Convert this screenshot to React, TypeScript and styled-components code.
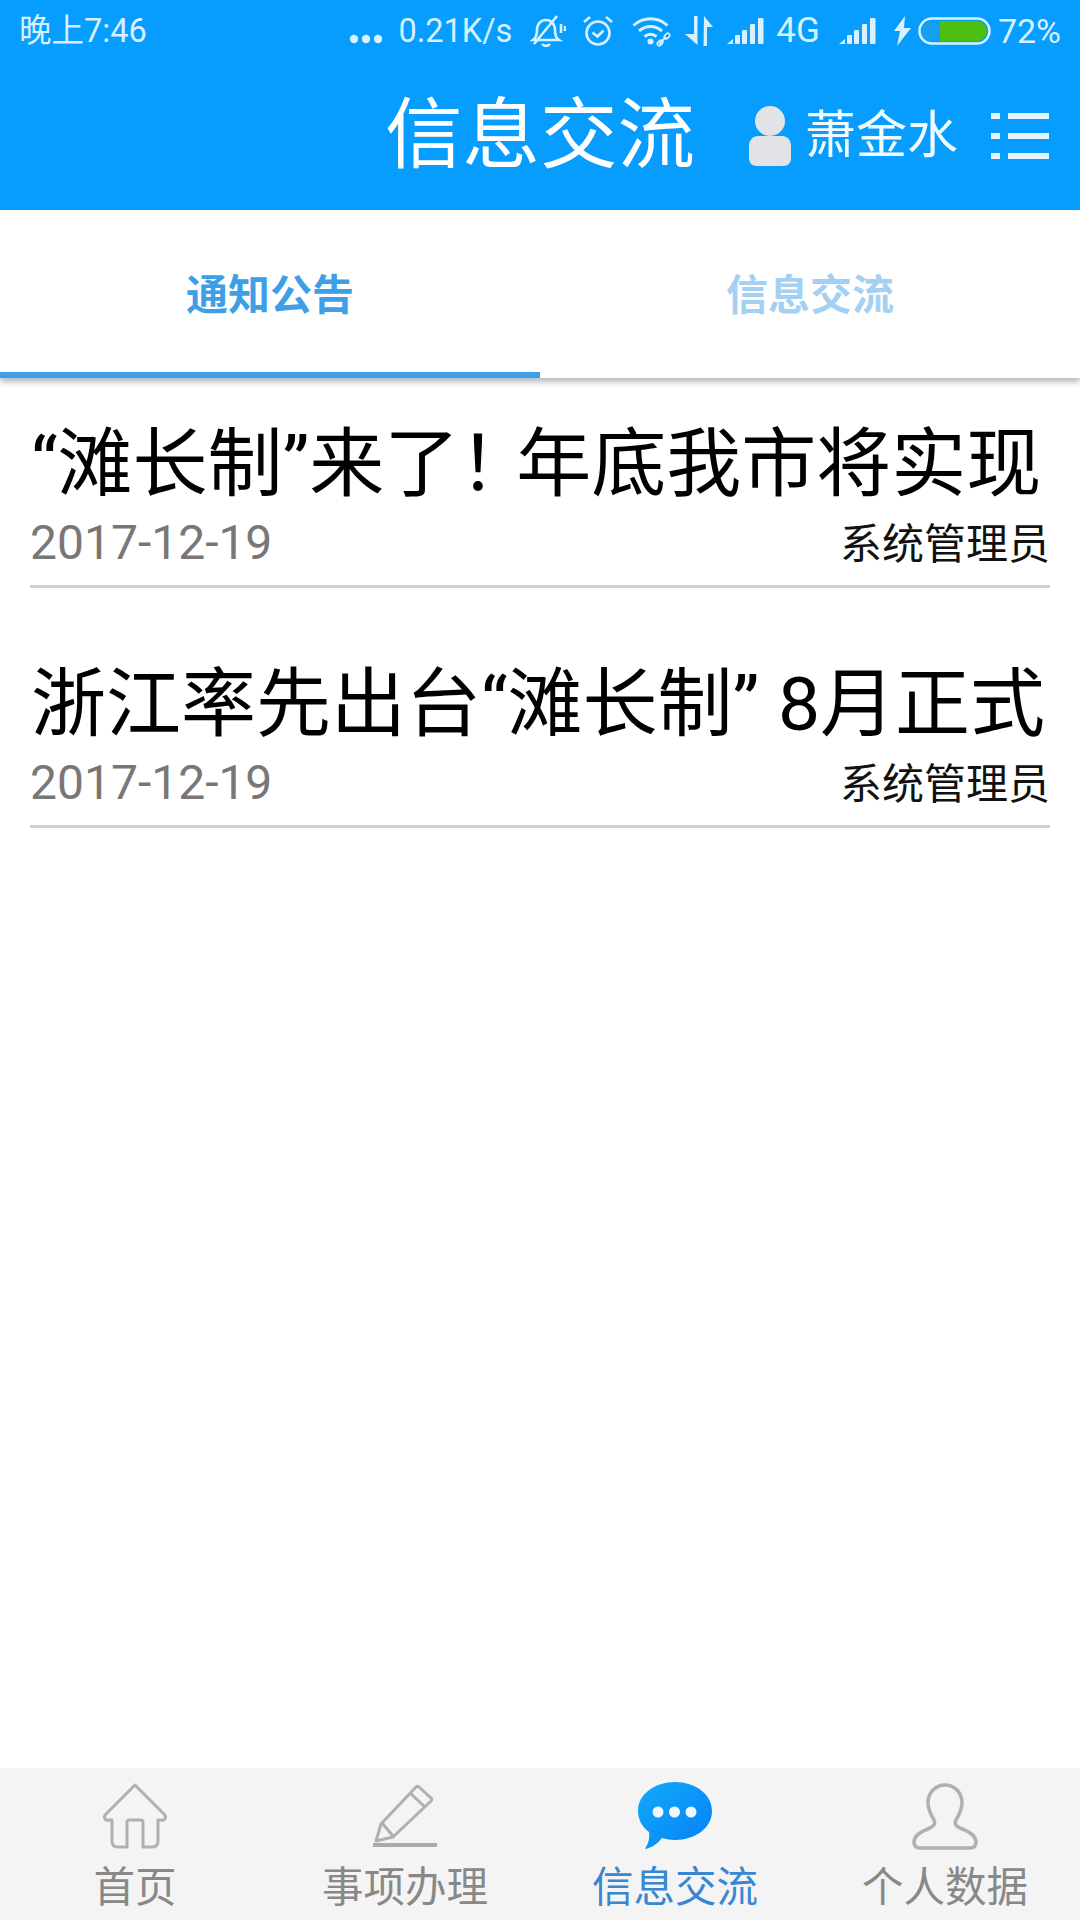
import React from "react";
import styled, { createGlobalStyle } from "styled-components";

const Global = createGlobalStyle`
  html, body { margin: 0; padding: 0; background: #fff; }
  body { font-family: Roboto, "Noto Sans CJK SC", sans-serif; }
  * { box-sizing: border-box; }
`;

const Page = styled.div`
  width: 1080px;
  height: 1920px;
  display: flex;
  flex-direction: column;
  background: #fff;
  overflow: hidden;
`;
const Top = styled.header`
  height: 210px;
  background: #069dfe;
  display: flex;
  flex-direction: column;
`;
const StatusBar = styled.div`
  height: 62px;
  display: flex;
  align-items: center;
  justify-content: space-between;
  padding: 0 19px;
  color: #d8f1ff;
  font-size: 32.5px;
  line-height: 62px;
`;
const StatusRight = styled.div`
  display: flex;
  align-items: center;
`;
const StatusItem = styled.div<{ $gap: number; $size?: number; $drop?: number }>`
  display: flex;
  align-items: center;
  margin-left: ${(p) => p.$gap}px;
  margin-top: ${(p) => p.$drop ?? 0}px;
  ${(p) => (p.$size ? `font-size: ${p.$size}px;` : "")}
`;
const AppBar = styled.div`
  height: 148px;
  display: grid;
  grid-template-columns: 1fr auto 1fr;
  align-items: center;
`;
const AppTitle = styled.h1`
  grid-column: 2;
  margin: 0;
  font-size: 77.5px;
  line-height: 90px;
  font-weight: 400;
  color: #fff;
  white-space: nowrap;
`;
const UserBox = styled.div`
  grid-column: 3;
  display: flex;
  align-items: center;
  justify-content: flex-end;
  padding-right: 31px;
`;
const UserName = styled.span`
  font-size: 51px;
  line-height: 60px;
  color: #f2faff;
  margin: 0 33px 0 14px;
  white-space: nowrap;
`;
const Tabs = styled.nav`
  height: 168px;
  display: grid;
  grid-template-columns: 1fr 1fr;
  box-shadow: 0 4px 6px rgba(90, 100, 110, 0.45);
  position: relative;
  background: #fff;
`;
const Tab = styled.div<{ $active?: boolean }>`
  display: flex;
  align-items: center;
  justify-content: center;
  font-size: 42px;
  font-weight: 700;
  color: ${(p) => (p.$active ? "#3f9fe6" : "#a4d1f3")};
  border-bottom: 6px solid ${(p) => (p.$active ? "#3f9fe6" : "transparent")};
`;
const List = styled.main`
  flex: 1;
  padding: 0 30px;
  display: flex;
  flex-direction: column;
`;
const Row = styled.article`
  height: 240px;
  border-bottom: 3px solid #cfcfcf;
  display: flex;
  flex-direction: column;
  justify-content: flex-end;
  padding-bottom: 13px;
  &:first-child { height: 210px; }
`;
const RowTitle = styled.div`
  font-size: 75px;
  line-height: 90px;
  color: #000;
  white-space: nowrap;
  margin-left: 1px;
`;
const Bang = styled.span`
  letter-spacing: -20px;
  margin-right: 2px;
`;
const RowMeta = styled.div`
  display: flex;
  justify-content: space-between;
  align-items: center;
  height: 60px;
  margin-top: 3px;
`;
const RowDate = styled.span`
  font-size: 48px;
  color: #777;
`;
const RowAuthor = styled.span`
  font-size: 42px;
  color: #111;
  margin-bottom: 4px;
`;
const TabBar = styled.footer`
  height: 152px;
  background: #f4f4f4;
  display: grid;
  grid-template-columns: repeat(4, 1fr);
`;
const TabItem = styled.div<{ $active?: boolean }>`
  display: flex;
  flex-direction: column;
  align-items: center;
  padding-top: 14px;
  color: ${(p) => (p.$active ? "#3a87d0" : "#888")};
`;
const TabIcon = styled.div`
  height: 68px;
  display: flex;
  align-items: center;
  justify-content: center;
`;
const TabLabel = styled.span`
  font-size: 41.5px;
  line-height: 52px;
  margin-top: 12px;
  white-space: nowrap;
`;

const C = "#d8f1ff";

const Dots = () => (
  <svg width="34" height="10" viewBox="0 0 34 10">
    <circle cx="5" cy="5" r="4.2" fill={C} />
    <circle cx="17" cy="5" r="4.2" fill={C} />
    <circle cx="29" cy="5" r="4.2" fill={C} />
  </svg>
);
const Bell = () => (
  <svg width="36" height="36" viewBox="0 0 36 36" fill="none" stroke={C} strokeWidth="2.6">
    <path d="M3 27c3-2 4-5 4-10 0-6 4-10 9-10s9 4 9 10c0 5 1 8 4 10z" />
    <path d="M12 31c2 2.500 6 2.500 8 0" />
    <path d="M4 31 27 3" />
    <path d="M31 11v9M35 13v5" />
  </svg>
);
const Alarm = () => (
  <svg width="32" height="32" viewBox="0 0 32 32" fill="none" stroke={C} strokeWidth="2.6">
    <circle cx="16" cy="18" r="11.500" />
    <path d="M10.500 17.500l5 4 6-6" />
    <path d="M2 7l6-5M30 7l-6-5" />
  </svg>
);
const Wifi = () => (
  <svg width="40" height="32" viewBox="0 0 40 32" fill="none" stroke={C} strokeWidth="3">
    <path d="M1.500 10.500c10-9 24-9 34 0" />
    <path d="M7 16c7-6 16-6 23 0" />
    <path d="M12.500 21.500c4-3 8-3 12 0" />
    <circle cx="18.500" cy="26.500" r="3" fill={C} stroke="none" />
    <path d="M27 29l7-7" strokeWidth="2" />
    <rect x="32" y="19" width="6" height="4" rx="2" transform="rotate(-45 35 21)" strokeWidth="1.600" />
    <rect x="25" y="26" width="6" height="4" rx="2" transform="rotate(-45 28 28)" strokeWidth="1.600" />
  </svg>
);
const Arrows = () => (
  <svg width="28" height="30" viewBox="0 0 28 30" fill={C}>
    <path d="M9 0h3.500v29L0 18h9z" />
    <path d="M19 0l9 11h-6v19h-3.500z" />
  </svg>
);
const Signal = () => (
  <svg width="37" height="26" viewBox="0 0 37 26" fill={C}>
    <path d="M0 26l6-5v5z" />
    <rect x="8" y="17" width="5" height="9" rx="1" />
    <rect x="15" y="12" width="5" height="14" rx="1" />
    <rect x="23" y="6" width="5" height="20" rx="1" />
    <rect x="31" y="0" width="5.500" height="26" rx="1" />
  </svg>
);
const Bolt = () => (
  <svg width="17" height="30" viewBox="0 0 17 30" fill={C}>
    <path d="M11 0 0 15h6L3 30l14-18h-7z" />
  </svg>
);
const Battery = () => (
  <svg width="73" height="28" viewBox="0 0 73 28">
    <rect x="1.500" y="1.500" width="70" height="25" rx="12.500" fill="none" stroke={C} strokeWidth="2.500" />
    <path d="M22 4h37a10 10 0 0 1 0 20H22z" fill="#4cbf0f" />
    <rect x="4" y="4" width="18" height="20" rx="9" fill="#2e9fe0" opacity="0.4" />
  </svg>
);
const Person = () => (
  <svg width="42" height="60" viewBox="0 0 42 60" fill="#e2e3e6">
    <circle cx="21" cy="15" r="15" />
    <path d="M9 30h24c5 0 9 4 9 10v12c0 5-3 8-8 8H8c-5 0-8-3-8-8V40c0-6 4-10 9-10z" />
  </svg>
);
const Menu = () => (
  <svg width="58" height="46" viewBox="0 0 58 46" fill="#e4f5ff">
    <rect x="0" y="0" width="9" height="6" />
    <rect x="17" y="0" width="41" height="6" />
    <rect x="0" y="20" width="9" height="6" />
    <rect x="17" y="20" width="41" height="6" />
    <rect x="0" y="40" width="9" height="6" />
    <rect x="17" y="40" width="41" height="6" />
  </svg>
);
const Home = () => (
  <svg width="64" height="66" viewBox="0 0 64 66" fill="none" stroke="#b0b0b0" strokeWidth="3" strokeLinejoin="round">
    <path d="M32 2 3 31c-3 3-1 7 3 6h3v21c0 4 2 6 6 6h9V39c0-1 1-2 2-2h12c1 0 2 1 2 2v25h9c4 0 6-2 6-6V37h3c4 1 6-3 3-6z" />
  </svg>
);
const Pencil = () => (
  <svg width="64" height="62" viewBox="0 0 64 62" fill="none" stroke="#b0b0b0" strokeWidth="3" strokeLinejoin="round">
    <path d="M46 2 58 13c1 1 1 2 0 3L20 52 3 56l5-17L43 2c1-1 2-1 3 0z" />
    <path d="M37 8l15 14M9 38l11 13" />
    <path d="M0 60h64" strokeWidth="4" stroke="#aaa" />
  </svg>
);
const Bubble = () => (
  <svg width="74" height="68" viewBox="0 0 74 68">
    <defs>
      <linearGradient id="bubbleFill" x1="0" y1="0" x2="1" y2="1">
        <stop offset="0" stopColor="#12aafc" />
        <stop offset="1" stopColor="#0580f5" />
      </linearGradient>
    </defs>
    <path d="M37 0c20 0 37 12 37 29S57 58 37 58c-5 0-9-1-13-2C20 61 14 66 7 67c3-5 5-10 4-17C4 45 0 37 0 29 0 12 17 0 37 0z" fill="url(#bubbleFill)" />
    <circle cx="20" cy="30" r="5.500" fill="#eef8ff" />
    <circle cx="36.500" cy="30" r="5.500" fill="#eef8ff" />
    <circle cx="53" cy="30" r="5.500" fill="#eef8ff" />
  </svg>
);
const User = () => (
  <svg width="66" height="67" viewBox="0 0 66 67" fill="none" stroke="#b0b0b0" strokeWidth="3.500" strokeLinejoin="round">
    <path d="M33 2c10 0 17 8 17 18 0 7-3 12-6 17-2 4 0 6 4 8 8 3 16 7 16 14 0 4-2 6-6 6H8c-4 0-6-2-6-6 0-7 8-11 16-14 4-2 6-4 4-8-3-5-6-10-6-17C16 10 23 2 33 2z" />
  </svg>
);

const Meta = () => (
  <RowMeta>
    <RowDate>2017-12-19</RowDate>
    <RowAuthor>系统管理员</RowAuthor>
  </RowMeta>
);

export default function App() {
  return (
    <Page>
      <Global />
      <Top>
        <StatusBar>
          <span>晚上7:46</span>
          <StatusRight>
            <StatusItem $gap={0} $drop={16}><Dots /></StatusItem>
            <StatusItem $gap={15}>0.21K/s</StatusItem>
            <StatusItem $gap={18}><Bell /></StatusItem>
            <StatusItem $gap={16}><Alarm /></StatusItem>
            <StatusItem $gap={18}><Wifi /></StatusItem>
            <StatusItem $gap={13}><Arrows /></StatusItem>
            <StatusItem $gap={14}><Signal /></StatusItem>
            <StatusItem $gap={12} $size={35}>4G</StatusItem>
            <StatusItem $gap={19}><Signal /></StatusItem>
            <StatusItem $gap={18}><Bolt /></StatusItem>
            <StatusItem $gap={7}><Battery /></StatusItem>
            <StatusItem $gap={7} $size={34}>72%</StatusItem>
          </StatusRight>
        </StatusBar>
        <AppBar>
          <AppTitle>信息交流</AppTitle>
          <UserBox>
            <Person />
            <UserName>萧金水</UserName>
            <Menu />
          </UserBox>
        </AppBar>
      </Top>
      <Tabs>
        <Tab $active>通知公告</Tab>
        <Tab>信息交流</Tab>
      </Tabs>
      <List>
        <Row>
          <RowTitle>“滩长制”来了<Bang>！</Bang>年底我市将实现</RowTitle>
          <Meta />
        </Row>
        <Row>
          <RowTitle>浙江率先出台“滩长制” 8月正式</RowTitle>
          <Meta />
        </Row>
      </List>
      <TabBar>
        <TabItem><TabIcon><Home /></TabIcon><TabLabel>首页</TabLabel></TabItem>
        <TabItem><TabIcon><Pencil /></TabIcon><TabLabel>事项办理</TabLabel></TabItem>
        <TabItem $active><TabIcon><Bubble /></TabIcon><TabLabel>信息交流</TabLabel></TabItem>
        <TabItem><TabIcon><User /></TabIcon><TabLabel>个人数据</TabLabel></TabItem>
      </TabBar>
    </Page>
  );
}
